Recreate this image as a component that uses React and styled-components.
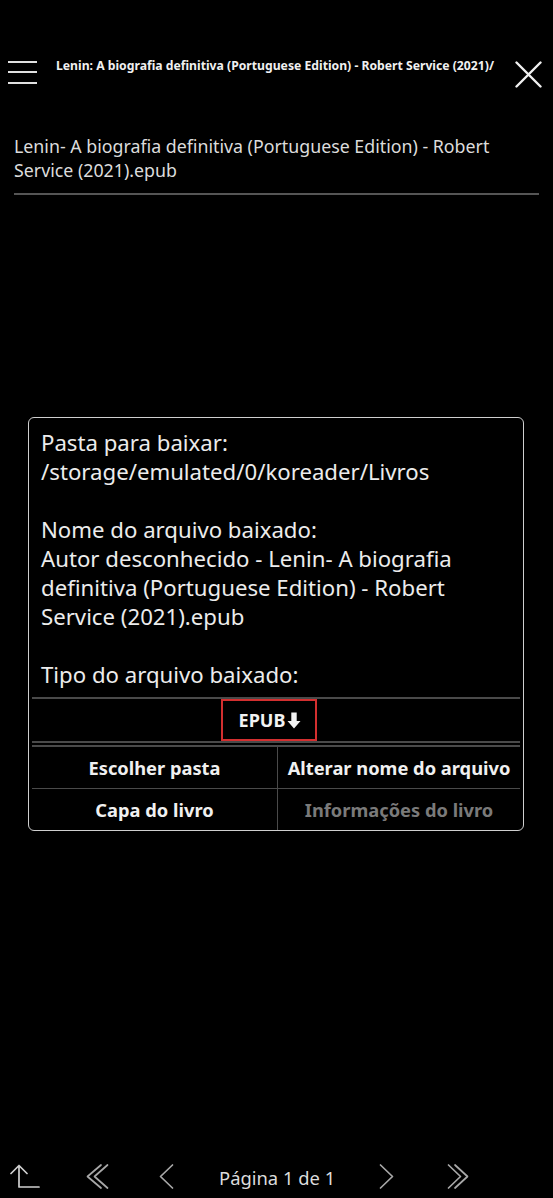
import React from 'react';
import styled, { createGlobalStyle } from 'styled-components';

const Global = createGlobalStyle`
  html, body {
    margin: 0;
    padding: 0;
    background: #000;
  }
  body {
    font-family: "Noto Sans", "Open Sans", sans-serif;
    color: #e6e6e6;
  }
`

const Page = styled.div`
  width: 553px;
  height: 1198px;
  display: flex;
  flex-direction: column;
  background: #000;
  overflow: hidden;
`

const TitleBar = styled.header`
  display: flex;
  align-items: center;
  height: 50px;
  margin-top: 48px;
  padding: 0 11px 0 8px;
`

const MenuButton = styled.div`
  width: 29px;
  display: flex;
  flex-direction: column;
  gap: 8.5px;
  margin-top: -2px;
  & span {
    display: block;
    height: 2px;
    background: #e0e0e0;
  }
`

const TitleText = styled.div`
  flex: 1;
  margin: -16px 0 0 19px;
  font-size: 12.2px;
  font-weight: 700;
  color: #f0f0f0;
  white-space: nowrap;
  overflow: hidden;
`

const CloseButton = styled.svg`
  width: 27px;
  height: 27px;
  margin-top: 2px;
`

const FileName = styled.div`
  margin: 36px 14px 0;
  padding-bottom: 11px;
  font-size: 17.8px;
  line-height: 24px;
  color: #dcdcdc;
  border-bottom: 2px solid #555;
`

const Dialog = styled.div`
  margin: 222px 29px 0 28px;
  border: 1.5px solid #cfcfcf;
  border-radius: 6px;
`

const Message = styled.div`
  padding: 10px 12px 8px;
  font-size: 22.2px;
  line-height: 29px;
  color: #ececec;
  white-space: pre-line;
`

const Divider = styled.div`
  height: ${p => p.$double ? '2px' : '0'};
  margin: 0 3px;
  border-top: 2px solid #4a4a4a;
  border-bottom: ${p => p.$double ? '2px solid #4a4a4a' : 'none'};
`

const FormatRow = styled.div`
  height: 42px;
  display: flex;
  justify-content: center;
  align-items: center;
`

const FormatBox = styled.div`
  box-sizing: border-box;
  width: 96px;
  height: 42px;
  margin: 0 14px 0 0;
  padding-left: 2px;
  border: 2px solid #d32f2f;
  display: flex;
  justify-content: center;
  align-items: center;
  gap: 2px;
  font-size: 18px;
  font-weight: 700;
  color: #f2f2f2;
`

const ButtonRow = styled.div`
  display: grid;
  grid-template-columns: 245px 1fr;
  height: 41px;
  margin: 0 3px;
  border-top: ${p => p.$first ? 'none' : '1.5px solid #4a4a4a'};
`

const ActionButton = styled.div`
  display: flex;
  justify-content: center;
  align-items: center;
  font-size: 18.3px;
  font-weight: 700;
  color: ${p => p.$disabled ? '#7a7a7a' : '#f0f0f0'};
  border-left: ${p => p.$right ? '1.5px solid #4a4a4a' : 'none'};
  white-space: nowrap;
`

const Footer = styled.footer`
  margin-top: auto;
  height: 42px;
  display: flex;
  align-items: center;
`

const NavIcon = styled.svg`
  width: ${p => p.$w}px;
  height: 28px;
  margin-left: ${p => p.$ml}px;
  flex-shrink: 0;
`

const PageLabel = styled.div`
  margin-left: ${p => p.$ml}px;
  width: 114px;
  text-align: center;
  font-size: 18.4px;
  color: #dcdcdc;
  white-space: nowrap;
  flex-shrink: 0;
`

const chevron = { stroke: '#a8a8a8', strokeWidth: 1.7, fill: 'none', strokeLinecap: 'round', strokeLinejoin: 'round' }
const arrow = { ...chevron, stroke: '#d0d0d0' }

export default function App() {
  return (
    <>
      <Global />
      <Page>
        <TitleBar>
          <MenuButton>
            <span /><span /><span />
          </MenuButton>
          <TitleText>Lenin: A biografia definitiva (Portuguese Edition) - Robert Service (2021)/</TitleText>
          <CloseButton viewBox="0 0 27 27">
            <path d="M1.5 1.5 L25.5 25.5 M25.5 1.5 L1.5 25.5" stroke="#f0f0f0" strokeWidth="2.4" strokeLinecap="round" />
          </CloseButton>
        </TitleBar>

        <FileName>Lenin- A biografia definitiva (Portuguese Edition) - Robert Service (2021).epub</FileName>

        <Dialog>
          <Message>
            {`Pasta para baixar:
/storage/emulated/0/koreader/Livros

Nome do arquivo baixado:
Autor desconhecido - Lenin- A biografia definitiva (Portuguese Edition) - Robert Service (2021).epub

Tipo do arquivo baixado:`}
          </Message>
          <Divider />
          <FormatRow>
            <FormatBox>
              EPUB
              <svg width="14" height="17" viewBox="0 0 14 17">
                <path d="M4.3 0.5 H9.7 V9 H13.5 L7 16.5 L0.5 9 H4.3 Z" fill="#f2f2f2" />
              </svg>
            </FormatBox>
          </FormatRow>
          <Divider $double />
          <ButtonRow $first>
            <ActionButton>Escolher pasta</ActionButton>
            <ActionButton $right>Alterar nome do arquivo</ActionButton>
          </ButtonRow>
          <ButtonRow>
            <ActionButton>Capa do livro</ActionButton>
            <ActionButton $right $disabled>Informações do livro</ActionButton>
          </ButtonRow>
        </Dialog>

        <Footer>
          <NavIcon $w={30} $ml={10} viewBox="0 0 30 28">
            <path d="M9 24 V2.5 M1 10.5 L9 2.5 L17 10.5 M9 24 H29" {...arrow} />
          </NavIcon>
          <NavIcon $w={23} $ml={46} viewBox="0 0 23 28">
            <path d="M15 2 L1.5 13.5 L15 25 M21.5 2 L8.5 13.5 L21.5 25" {...chevron} />
          </NavIcon>
          <NavIcon $w={15} $ml={50} viewBox="0 0 15 28">
            <path d="M13.5 2 L1.5 13.5 L13.5 25" {...chevron} />
          </NavIcon>
          <PageLabel $ml={45}>Página 1 de 1</PageLabel>
          <NavIcon $w={15} $ml={46} viewBox="0 0 15 28">
            <path d="M1.5 2 L13.5 13.5 L1.5 25" {...chevron} />
          </NavIcon>
          <NavIcon $w={22} $ml={53} viewBox="0 0 22 28">
            <path d="M1.5 2 L13.5 13.5 L1.5 25 M8 2 L20.5 13.5 L8 25" {...chevron} />
          </NavIcon>
        </Footer>
      </Page>
    </>
  )
}
